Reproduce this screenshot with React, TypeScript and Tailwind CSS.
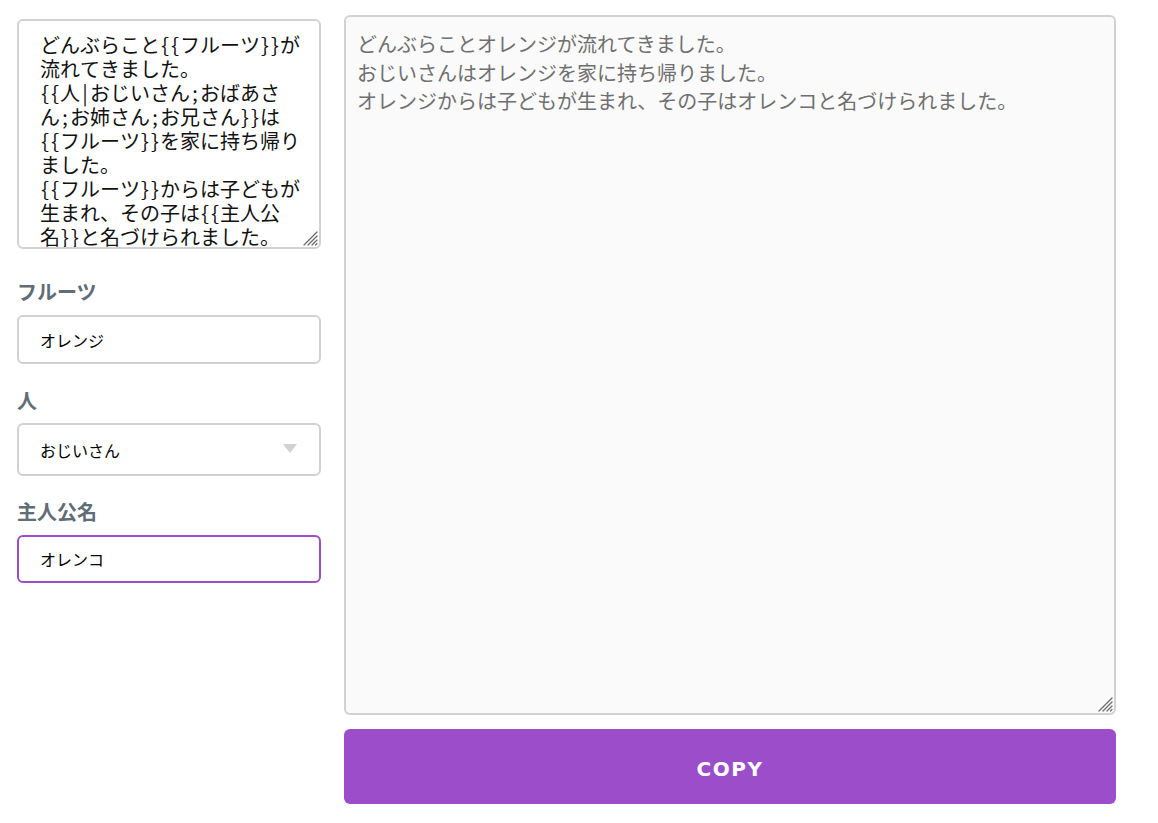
import React from 'react';

const template = `どんぶらこと{{フルーツ}}が流れてきました。
{{人|おじいさん;おばあさん;お姉さん;お兄さん}}は{{フルーツ}}を家に持ち帰りました。
{{フルーツ}}からは子どもが生まれ、その子は{{主人公名}}と名づけられました。`;

const output = `どんぶらことオレンジが流れてきました。
おじいさんはオレンジを家に持ち帰りました。
オレンジからは子どもが生まれ、その子はオレンコと名づけられました。`;

const jp = "font-['Noto_Sans_CJK_JP',sans-serif]";

const Label = ({ children, className = '' }: { children: React.ReactNode; className?: string }) => (
  <label className={`block h-[24px] text-[20px] leading-[24px] font-bold text-[#606c76] ${className}`}>{children}</label>
);

// resize grip drawn over the textarea corner
const Grip = () => (
  <svg className="absolute right-[3px] bottom-[3px] pointer-events-none" width="16" height="16" viewBox="0 0 16 16">
    <g stroke="#6b6b6b" strokeWidth="1.2" strokeLinecap="round">
      <line x1="2" y1="15" x2="15" y2="2" />
      <line x1="6" y1="15" x2="15" y2="6" />
      <line x1="10" y1="15" x2="15" y2="10" />
      <line x1="13.5" y1="15" x2="15" y2="13.5" />
    </g>
  </svg>
);

export default function App() {
  return (
    <div className={`min-h-screen bg-white pt-[15px] pl-[17px] flex gap-[23px] ${jp}`}>
      {/* template + fields */}
      <div className="w-[304px] mt-[4px] flex flex-col">
        <div className="relative">
          <textarea
            readOnly
            defaultValue={template}
            className="block h-[230px] w-full resize-none border-2 border-[#d1d1d1] rounded-[6px] bg-white pl-[21px] pr-[14px] pt-[12px] text-[20px] leading-[24px] text-[#111] overflow-hidden outline-none font-['Noto_Sans_Mono_CJK_JP','Noto_Sans_CJK_JP',monospace]"
          />
          <Grip />
        </div>

        <Label className="mt-[31px]">フルーツ</Label>
        <input
          readOnly
          defaultValue="オレンジ"
          className="mt-[11px] h-[49px] w-full border-2 border-[#d1d1d1] rounded-[6px] pl-[21px] text-[16px] text-black outline-none"
        />

        <Label className="mt-[25px]">人</Label>
        <div className="relative mt-[10px]">
          <select
            defaultValue="おじいさん"
            className="h-[53px] w-full appearance-none border-2 border-[#d1d1d1] rounded-[6px] bg-white pl-[21px] text-[16px] text-black outline-none"
          >
            <option>おじいさん</option>
            <option>おばあさん</option>
            <option>お姉さん</option>
            <option>お兄さん</option>
          </select>
          <svg className="absolute right-[24px] top-[21px] pointer-events-none" width="14" height="10" viewBox="0 0 14 10">
            <path d="M0 0 H14 L7 9 Z" fill="#d1d1d1" />
          </svg>
        </div>

        <Label className="mt-[24px]">主人公名</Label>
        <input
          readOnly
          defaultValue="オレンコ"
          className="mt-[11px] h-[48px] w-full border-2 border-[#9b4dca] rounded-[6px] pl-[21px] text-[16px] text-black outline-none"
        />
      </div>

      {/* result */}
      <div className="w-[772px] flex flex-col">
        <div className="relative">
          <textarea
            readOnly
            defaultValue={output}
            className="block h-[700px] w-full resize-none border-2 border-[#d1d1d1] rounded-[6px] bg-[#fafafa] pl-[11px] pt-[13px] text-[20px] leading-[28.5px] text-[#6f6f6f] outline-none"
          />
          <Grip />
        </div>
        <button className="mt-[14px] h-[75px] w-full rounded-[6px] bg-[#9b4dca] pt-[4px] text-white text-[20px] font-bold tracking-[1.5px] font-['DejaVu_Sans',sans-serif]">
          COPY
        </button>
      </div>
    </div>
  );
}
